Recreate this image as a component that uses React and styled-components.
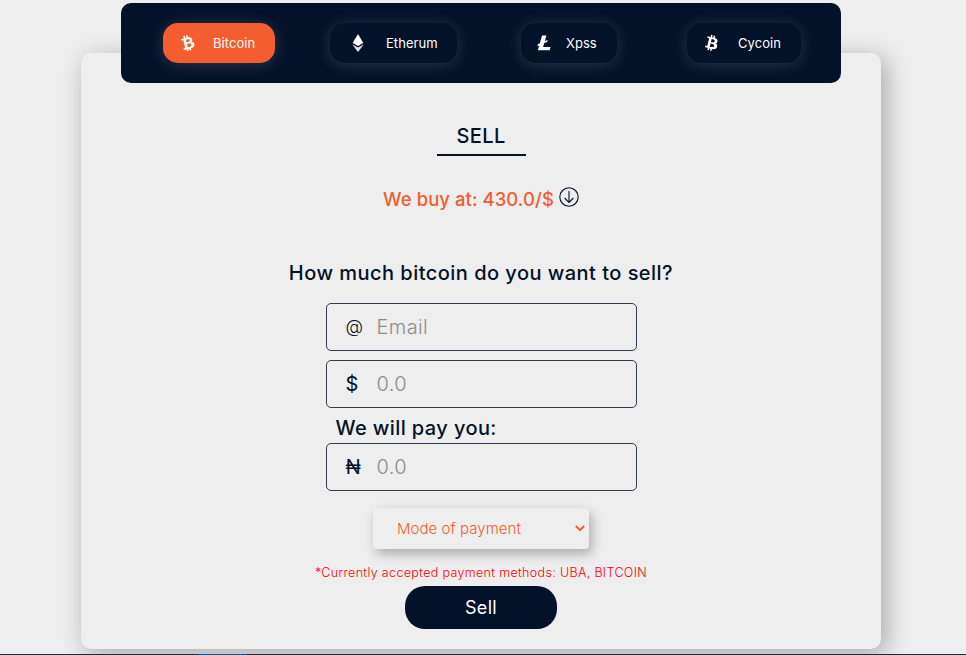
import React from "react";
import styled, { createGlobalStyle } from "styled-components";
import { FaBtc } from "react-icons/fa";

const navy = "#031228";
const orange = "#f45d2f";
const ground = "#eeeeee";

const GlobalStyle = createGlobalStyle`
  * { box-sizing: border-box; }
  body {
    margin: 0;
    overflow: hidden;
    background: ${ground};
    color: ${navy};
    font-family: Inter, "Open Sans", sans-serif;
  }
`;

const Page = styled.div`
  height: 655px;
  padding-top: 3px;
  display: flex;
  flex-direction: column;
  overflow: hidden;
`;

const CoinBar = styled.nav`
  flex: none;
  width: 720px;
  height: 80px;
  margin-left: 121px;
  padding-left: 42px;
  display: flex;
  align-items: center;
  border-radius: 10px;
  background: ${navy};
  z-index: 1;
`;

const CoinButton = styled.button`
  width: ${(p) => p.$width}px;
  height: 40px;
  margin: 0 ${(p) => p.$gap}px 0 0;
  padding: 0 0 0 ${(p) => p.$pad}px;
  display: flex;
  align-items: center;
  gap: ${(p) => p.$space}px;
  border: 0;
  border-radius: 15px;
  background: ${(p) => (p.$active ? orange : navy)};
  box-shadow: 0 2px 15px rgba(237, 237, 237, 0.17);
  color: #fff;
  font: 400 13px/16px Inter, sans-serif;
  letter-spacing: 0.05px;
  white-space: nowrap;

  svg { flex: none; }
`;

const TiltedBitcoin = styled(FaBtc)`
  transform: rotate(${(p) => p.$tilt}deg);
`;

const Card = styled.main`
  flex: none;
  width: 800px;
  height: 596px;
  margin: -30px 0 0 81px;
  padding-top: 71px;
  display: flex;
  flex-direction: column;
  align-items: center;
  border-radius: 10px;
  background: ${ground};
  box-shadow: 5px 5px 25px rgba(0, 0, 0, 0.3);
`;

const Title = styled.h1`
  width: 89px;
  height: 32px;
  margin: 0;
  border-bottom: 2px solid ${navy};
  font-size: 20px;
  line-height: 24px;
  font-weight: 500;
  letter-spacing: 0.4px;
  text-align: center;
`;

const Rate = styled.div`
  height: 24px;
  margin-top: 31px;
  display: flex;
  align-items: flex-start;
  gap: 5px;
  color: ${orange};
  font-size: 18.5px;
  line-height: 25px;
  font-weight: 500;
  letter-spacing: 0.05px;
  white-space: nowrap;

  svg { color: ${navy}; }
`;

const Question = styled.h2`
  margin: 49px 0 0;
  font-size: 20px;
  line-height: 26px;
  font-weight: 500;
  letter-spacing: 0.47px;
  white-space: nowrap;
`;

const Field = styled.label`
  flex: none;
  width: 311px;
  height: 48px;
  margin-top: ${(p) => p.$top}px;
  padding-left: 19px;
  display: flex;
  align-items: center;
  border: 1px solid #303d52;
  border-radius: 5px;
`;

const Symbol = styled.span`
  width: 31px;
  font-size: ${(p) => p.$size || 20}px;
  line-height: 24px;
  font-weight: ${(p) => p.$weight || 400};
`;

const Input = styled.input`
  width: 230px;
  padding: 0;
  border: 0;
  outline: 0;
  background: transparent;
  font: 300 20px/24px Inter, sans-serif;
  letter-spacing: 0.4px;

  &::placeholder { color: #8c8c8c; opacity: 1; }
`;

const Payout = styled.div`
  width: 311px;
  height: 26px;
  margin-top: 6px;
  padding-left: 10px;
  font-size: 20px;
  line-height: 28px;
  font-weight: 500;
  letter-spacing: 0.4px;
  white-space: nowrap;
`;

const PaymentMode = styled.button`
  flex: none;
  width: 216px;
  height: 41px;
  margin-top: 17px;
  padding: 0 4px 0 24px;
  display: flex;
  align-items: center;
  justify-content: space-between;
  border: 0;
  border-radius: 4px;
  background: ${ground};
  box-shadow: 3px 5px 12px rgba(0, 0, 0, 0.28);
  color: ${orange};
  font: 300 15px/20px Inter, sans-serif;
  letter-spacing: 0.05px;
`;

const Notice = styled.p`
  margin: 15px 0 0;
  color: #ff0000;
  font-size: 12.5px;
  line-height: 18px;
  font-weight: 300;
  letter-spacing: 0.34px;
  white-space: nowrap;
`;

const SellButton = styled.button`
  flex: none;
  width: 152px;
  height: 43px;
  margin-top: 4px;
  border: 0;
  border-radius: 20px;
  background: ${navy};
  color: #fff;
  font: 400 18px/22px Inter, sans-serif;
  letter-spacing: 0.3px;
`;

const BottomStrip = styled.div`
  flex: none;
  height: 1px;
  margin-top: 5px;
  display: flex;
  background: #0d2e48;
  z-index: 1;

  &::after {
    content: "";
    width: 48px;
    margin-left: 198px;
    background: #07599a;
  }
`;

const Ethereum = () => (
  <svg width="12" height="18" viewBox="0 0 12 18" fill="#fff">
    <path d="M6 0 11.3 9 6 12 .7 9Z" />
    <path d="M.3 10.5 6 13.5l5.7-3L6 18Z" opacity=".9" />
  </svg>
);

const Litecoin = () => (
  <svg width="14" height="16" viewBox="0 0 14 16" fill="#fff">
    <path d="M5 .5h4.4L7.9 6l2.7-1.1-.5 2.1-2.8 1.1-1.2 4h7.4l-.9 3.2H.8l1.5-4.9-1.9.8.6-2.2 1.9-.7Z" />
  </svg>
);

const DownCircle = () => (
  <svg width="20" height="20" viewBox="0 0 20 20" fill="none" stroke="currentColor" strokeWidth="1.1">
    <circle cx="10" cy="10" r="9.2" />
    <path d="M10 4v11.3M5.6 11l4.4 4.4 4.4-4.4" />
  </svg>
);

const Chevron = () => (
  <svg width="10" height="7" viewBox="0 0 10 7" fill="none" stroke="currentColor" strokeWidth="2">
    <path d="M.8 1 5 5.2 9.2 1" />
  </svg>
);

export default function App() {
  return (
    <>
      <GlobalStyle />
      <Page>
        <CoinBar>
          <CoinButton $active $width={112} $gap={55} $pad={17} $space={17}>
            <TiltedBitcoin size={16} $tilt={-14} />
            Bitcoin
          </CoinButton>
          <CoinButton $width={127} $gap={64} $pad={22} $space={22}>
            <Ethereum />
            Etherum
          </CoinButton>
          <CoinButton $width={96} $gap={70} $pad={16} $space={15}>
            <Litecoin />
            Xpss
          </CoinButton>
          <CoinButton $width={114} $gap={0} $pad={17} $space={18}>
            <TiltedBitcoin size={16} $tilt={14} />
            Cycoin
          </CoinButton>
        </CoinBar>
        <Card>
          <Title>SELL</Title>
          <Rate>
            We buy at: 430.0/$
            <DownCircle />
          </Rate>
          <Question>How much bitcoin do you want to sell?</Question>
          <Field $top={17}>
            <Symbol $size={18} $weight={300}>@</Symbol>
            <Input placeholder="Email" />
          </Field>
          <Field $top={9}>
            <Symbol>$</Symbol>
            <Input placeholder="0.0" />
          </Field>
          <Payout>We will pay you:</Payout>
          <Field $top={3}>
            <Symbol $size={20}>₦</Symbol>
            <Input placeholder="0.0" />
          </Field>
          <PaymentMode>
            Mode of payment
            <Chevron />
          </PaymentMode>
          <Notice>*Currently accepted payment methods: UBA, BITCOIN</Notice>
          <SellButton>Sell</SellButton>
        </Card>
        <BottomStrip />
      </Page>
    </>
  );
}
